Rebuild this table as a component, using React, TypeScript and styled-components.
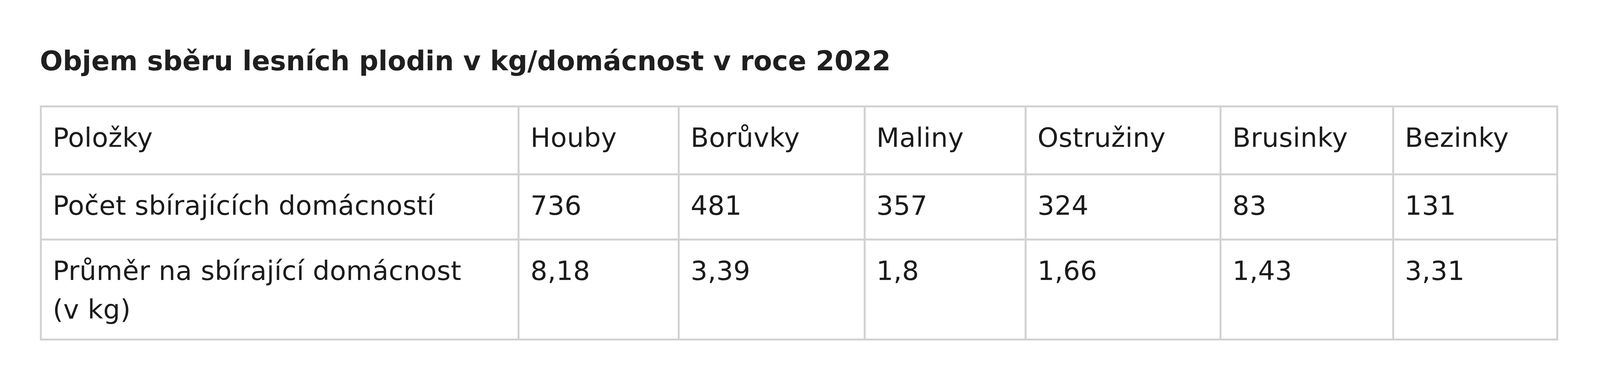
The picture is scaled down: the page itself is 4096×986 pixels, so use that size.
import React from "react";
import styled, { createGlobalStyle } from "styled-components";

interface RowProps {
  rowHeight: number;
}

interface ColProps {
  colWidth: number;
}

const GlobalStyle = createGlobalStyle`
  html, body {
    margin: 0;
    padding: 0;
    background: #ffffff;
  }
  body {
    font-family: "DejaVu Sans", Verdana, sans-serif;
    color: #1b1b1b;
  }
`;

const Page = styled.div`
  padding: 116px 0 0 102px;
`;

const Title = styled.h2`
  margin: 0 0 74px 0;
  font-family: "DejaVu Sans", Verdana, sans-serif;
  font-size: 69px;
  font-weight: bold;
  line-height: 80px;
  color: #1f1f1f;
`;

const Table = styled.table`
  border-collapse: collapse;
  table-layout: fixed;
  width: 3887px;
`;

const Col = styled.col<ColProps>`
  width: ${(props) => props.colWidth}px;
`;

const Row = styled.tr<RowProps>`
  height: ${(props) => props.rowHeight}px;
`;

const Cell = styled.td`
  border: 5px solid #d2d2d2;
  padding: 28px 28px 0 28px;
  vertical-align: top;
  font-size: 68px;
  letter-spacing: 0.4px;
  line-height: 99px;
  color: #1b1b1b;
  text-align: left;
  white-space: pre-line;
`;

const columns = [1223, 410, 475.5, 412.5, 499, 441.6, 420.4];

const rows: { height: number; cells: string[] }[] = [
  {
    height: 174,
    cells: ["Položky", "Houby", "Borůvky", "Maliny", "Ostružiny", "Brusinky", "Bezinky"],
  },
  {
    height: 167,
    cells: ["Počet sbírajících domácností", "736", "481", "357", "324", "83", "131"],
  },
  {
    height: 256,
    cells: ["Průměr na sbírající domácnost\n(v kg)", "8,18", "3,39", "1,8", "1,66", "1,43", "3,31"],
  },
];

const App: React.FC = () => {
  return (
    <>
      <GlobalStyle />
      <Page>
        <Title>Objem sběru lesních plodin v kg/domácnost v roce 2022</Title>
        <Table>
          <colgroup>
            {columns.map((w, i) => (
              <Col key={i} colWidth={w} />
            ))}
          </colgroup>
          <tbody>
            {rows.map((row, r) => (
              <Row key={r} rowHeight={row.height}>
                {row.cells.map((c, i) => (
                  <Cell key={i}>{c}</Cell>
                ))}
              </Row>
            ))}
          </tbody>
        </Table>
      </Page>
    </>
  );
};

export default App;
